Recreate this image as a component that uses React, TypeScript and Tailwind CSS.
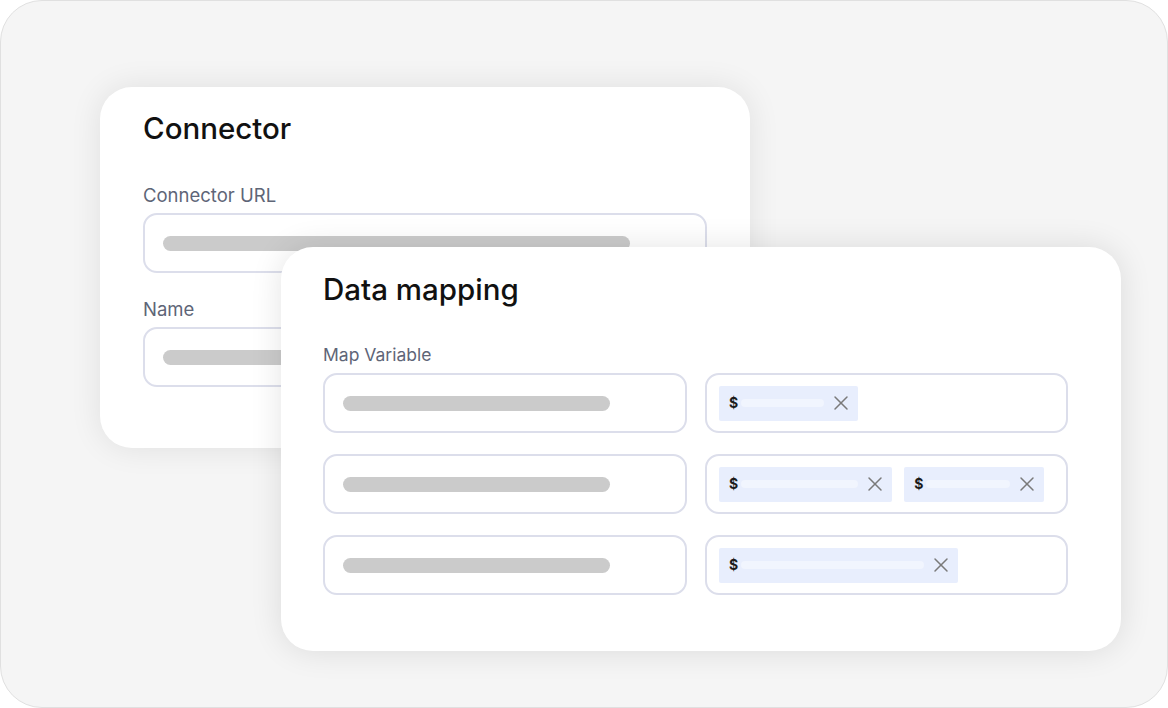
import { X } from "lucide-react";

const font = { fontFamily: "Inter, 'Noto Sans', sans-serif" };

// one placeholder token inside a variable field
function Chip({ barWidth }: { barWidth: number }) {
  return (
    <div className="flex h-[35px] items-center rounded-[2px] bg-[#e8eefd] pl-[10px] pr-[5px]">
      <span className="text-[14px] font-bold leading-none text-[#1c1c1c]">$</span>
      <div
        className="ml-[3px] h-[8px] rounded-full bg-[#f1f5fe]"
        style={{ width: barWidth }}
      />
      <X className="ml-[5px] text-[#7a7a7a]" size={24} strokeWidth={1.5} />
    </div>
  );
}

function Field({ width, bar }: { width: number; bar: number }) {
  return (
    <div
      className="flex h-[60px] items-center rounded-[14px] border-2 border-[#dcdeeb] bg-white pl-[18px]"
      style={{ width }}
    >
      <div className="h-[15px] rounded-full bg-[#cbcbcb]" style={{ width: bar }} />
    </div>
  );
}

const rows = [[83], [117, 84], [183]];

export default function App() {
  return (
    <div className="h-[708px] w-[1168px] bg-white" style={font}>
      <div className="grid h-full w-full overflow-hidden rounded-[42px] border border-[#e0e0e0] bg-[#f5f5f5]">
        {/* back card */}
        <div className="col-start-1 row-start-1 ml-[99px] mt-[86px] h-[361px] w-[650px] rounded-[32px] bg-white pl-[43px] pt-[24px] shadow-[0_0_32px_rgba(0,0,0,0.09)]">
          <h2 className="text-[29.5px] font-medium leading-[34px] text-[#111111]">Connector</h2>
          <div className="mt-[39px] text-[18.5px] leading-[22px] text-[#5e6577]">Connector URL</div>
          <div className="mt-[7px]">
            <Field width={564} bar={467} />
          </div>
          <div className="mt-[25px] text-[18.5px] leading-[22px] text-[#5e6577]">Name</div>
          <div className="mt-[7px]">
            <Field width={564} bar={467} />
          </div>
        </div>

        {/* front card */}
        <div className="col-start-1 row-start-1 ml-[280px] mt-[246px] h-[404px] w-[840px] self-start rounded-[32px] bg-white pl-[42px] pt-[25px] shadow-[0_0_32px_rgba(0,0,0,0.11)]">
          <h2 className="text-[29.5px] font-medium leading-[34px] text-[#111111]">Data mapping</h2>
          <div className="mt-[38px] text-[17.5px] leading-[22px] text-[#5e6577]">Map Variable</div>
          <div className="mt-[7px] flex flex-col gap-[21px]">
            {rows.map((chips, i) => (
              <div key={i} className="flex gap-[18px]">
                <Field width={364} bar={267} />
                <div className="flex h-[60px] w-[363px] items-center gap-[12px] rounded-[14px] border-2 border-[#dcdeeb] bg-white pl-[12px]">
                  {chips.map((w, j) => (
                    <Chip key={j} barWidth={w} />
                  ))}
                </div>
              </div>
            ))}
          </div>
        </div>
      </div>
    </div>
  );
}
